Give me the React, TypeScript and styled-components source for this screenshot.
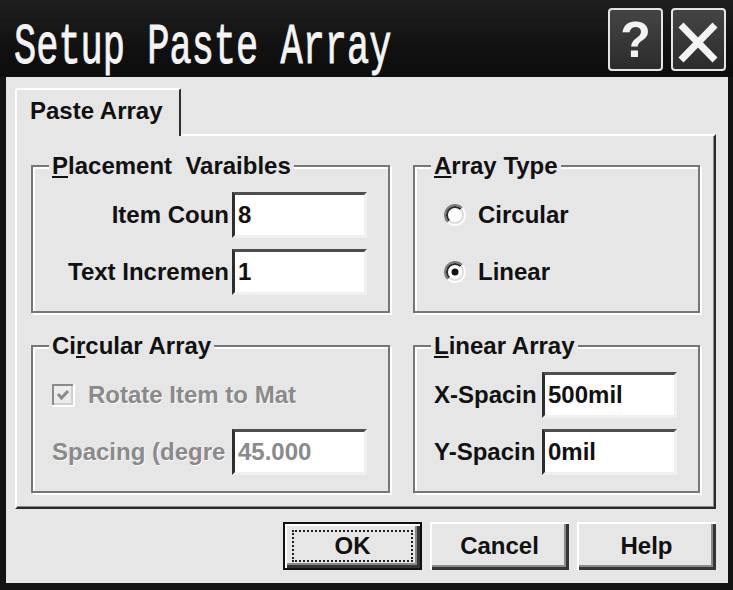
import React from "react";
import styled, { createGlobalStyle } from "styled-components";

const GlobalStyle = createGlobalStyle`
  html, body {
    margin: 0;
    padding: 0;
    background: #000;
  }
  body {
    font-family: "Liberation Sans", Arial, sans-serif;
  }
`;

const FACE = "#e6e6e6";

const Window = styled.div`
  width: 733px;
  height: 590px;
  background: #131313;
  display: flex;
  flex-direction: column;
  overflow: hidden;
`;

const TitleBar = styled.div`
  height: 77px;
  flex: none;
  box-sizing: border-box;
  padding: 8px 7px 0 14px;
  display: flex;
  align-items: flex-start;
  gap: 8px;
  background: linear-gradient(#1f1f1f, #111 60%, #0d0d0d);
`;

const Title = styled.div`
  flex: 1;
  margin-top: 12px;
  font-family: "Liberation Mono", "Courier New", monospace;
  font-size: 37px;
  line-height: 1;
  color: #f4f4f4;
  white-space: pre;
  -webkit-text-stroke: 0.6px #f4f4f4;
  transform: scaleY(1.55);
  transform-origin: left top;
`;

const CaptionButton = styled.div`
  width: 55px;
  height: 63px;
  box-sizing: border-box;
  border: 2px solid #e4e4e4;
  border-radius: 4px;
  background: linear-gradient(#444, #2c2c2c);
  display: flex;
  align-items: center;
  justify-content: center;
  color: #f2f2f2;
  font-family: "Liberation Sans", Arial, sans-serif;
  font-weight: bold;
  font-size: 50px;
  line-height: 1;
`;

const Client = styled.div`
  flex: 1;
  margin: 0 5px 7px 6px;
  background: ${FACE};
  box-sizing: border-box;
  padding: 11px 12px 13px 9px;
  display: flex;
  flex-direction: column;
  font-weight: bold;
  font-size: 24px;
  color: #111;
`;

const TabStrip = styled.div`
  display: flex;
`;

const Tab = styled.div`
  position: relative;
  z-index: 1;
  width: 166px;
  height: 48px;
  box-sizing: border-box;
  margin-bottom: -2px;
  padding: 7px 0 0 13px;
  line-height: 28px;
  background: ${FACE};
  border-left: 2px solid #fff;
  border-top: 2px solid #fff;
  border-right: 2px solid #2e2e2e;
  border-top-left-radius: 3px;
  border-top-right-radius: 2px;
`;

const Panel = styled.div`
  height: 375px;
  box-sizing: border-box;
  border: 2px solid;
  border-color: #fff #2a2a2a #2a2a2a #fff;
  box-shadow: inset -1px -1px 0 #8c8c8c;
  padding: 16px 14px 14px 14px;
  display: grid;
  grid-template-columns: 359px 287px;
  grid-template-rows: 161px 161px;
  column-gap: 23px;
  row-gap: 19px;
`;

const Group = styled.fieldset`
  margin: 0;
  padding: 0;
  min-width: 0;
  box-sizing: border-box;
  border: 2px solid #767676;
  box-shadow: inset 2px 2px 0 #fff, 2px 2px 0 #fff;
`;

const Legend = styled.legend`
  margin-left: 16px;
  padding: 0 3px;
  line-height: 28px;
  background: ${FACE};
  white-space: pre;
`;

const FieldGrid = styled.div`
  display: grid;
  grid-template-columns: 1fr 135px;
  grid-auto-rows: 46px;
  column-gap: 3px;
  row-gap: 11px;
  align-items: center;
  padding: 12px 21px 0 19px;
`;

const Label = styled.div<{ $align?: "left" | "right"; $disabled?: boolean }>`
  text-align: ${(p) => p.$align || "left"};
  white-space: pre;
  overflow: hidden;
  color: ${(p) => (p.$disabled ? "#8a8a8a" : "#111")};
  text-shadow: ${(p) => (p.$disabled ? "1px 1px 0 #fafafa" : "none")};
`;

const Edit = styled.div<{ $disabled?: boolean }>`
  height: 46px;
  box-sizing: border-box;
  border: 3px solid;
  border-color: #4e4e4e #f0f0f0 #f0f0f0 #2e2e2e;
  background: #fff;
  padding: 0 3px;
  line-height: 39px;
  color: ${(p) => (p.$disabled ? "#8a8a8a" : "#111")};
`;

const CheckRow = styled.div`
  grid-column: 1 / -1;
  display: flex;
  align-items: center;
  gap: 13px;
`;

const RadioList = styled.div`
  display: grid;
  grid-auto-rows: 46px;
  row-gap: 11px;
  padding: 12px 0 0 29px;
`;

const RadioRow = styled.div`
  display: flex;
  align-items: center;
  gap: 12px;
`;

const ButtonRow = styled.div`
  display: flex;
  justify-content: flex-end;
  gap: 8px;
  margin-top: 13px;
`;

const Button = styled.div<{ $default?: boolean }>`
  width: 139px;
  height: 48px;
  box-sizing: border-box;
  display: flex;
  padding: ${(p) => (p.$default ? "6px 7px" : "8px")};
  background: ${FACE};
  border: ${(p) => (p.$default ? "2px solid #111" : "none")};
  box-shadow: inset 2px 2px 0 #fff, inset -3px -3px 0 #353535,
    inset -5px -5px 0 #8a8a8a;
`;

const ButtonFace = styled.div<{ $focused?: boolean }>`
  flex: 1;
  display: flex;
  align-items: center;
  justify-content: center;
  border: 2px dotted ${(p) => (p.$focused ? "#222" : "transparent")};
  line-height: 28px;
`;

const Radio = ({ checked }: { checked?: boolean }) => (
  <svg width="22" height="22" viewBox="0 0 22 22">
    <circle cx="11" cy="11" r="10" fill="#fff" />
    <path d="M3.9 18.1 A10 10 0 0 1 18.1 3.9" stroke="#7a7a7a" strokeWidth="2" fill="none" />
    <path d="M18.1 3.9 A10 10 0 0 1 3.9 18.1" stroke="#fff" strokeWidth="2" fill="none" />
    <path d="M5.3 16.7 A8 8 0 0 1 16.7 5.3" stroke="#2a2a2a" strokeWidth="2" fill="none" />
    <path d="M16.7 5.3 A8 8 0 0 1 5.3 16.7" stroke="#dcdcdc" strokeWidth="2" fill="none" />
    {checked && <circle cx="11" cy="11" r="3.5" fill="#111" />}
  </svg>
);

const DisabledCheck = () => (
  <svg width="23" height="23" viewBox="0 0 23 23">
    <rect x="0" y="0" width="23" height="23" fill="#fff" />
    <rect x="0" y="0" width="21" height="21" fill="#8a8a8a" />
    <rect x="2" y="2" width="19" height="19" fill="#cfcfcf" />
    <rect x="2" y="2" width="17" height="17" fill="#ececec" />
    <polyline points="6,10 9.5,14 16,7" stroke="#8a8a8a" strokeWidth="3" fill="none" />
  </svg>
);

const CloseGlyph = () => (
  <svg width="51" height="59" viewBox="0 0 51 59">
    <path d="M8 15 L42 50 M42 15 L8 50" stroke="#f4f4f4" strokeWidth="7" />
  </svg>
);

export default function App() {
  return (
    <>
      <GlobalStyle />
      <Window>
        <TitleBar>
          <Title>Setup Paste Array</Title>
          <CaptionButton>?</CaptionButton>
          <CaptionButton>
            <CloseGlyph />
          </CaptionButton>
        </TitleBar>
        <Client>
          <TabStrip>
            <Tab>Paste Array</Tab>
          </TabStrip>
          <Panel>
            <Group>
              <Legend>
                <u>P</u>lacement  Varaibles
              </Legend>
              <FieldGrid>
                <Label $align="right">Item Coun</Label>
                <Edit>8</Edit>
                <Label $align="right">Text Incremen</Label>
                <Edit>1</Edit>
              </FieldGrid>
            </Group>
            <Group>
              <Legend>
                <u>A</u>rray Type
              </Legend>
              <RadioList>
                <RadioRow>
                  <Radio />
                  <span>Circular</span>
                </RadioRow>
                <RadioRow>
                  <Radio checked />
                  <span>Linear</span>
                </RadioRow>
              </RadioList>
            </Group>
            <Group>
              <Legend>
                Ci<u>r</u>cular Array
              </Legend>
              <FieldGrid>
                <CheckRow>
                  <DisabledCheck />
                  <Label $disabled>Rotate Item to Mat</Label>
                </CheckRow>
                <Label $disabled>Spacing (degre</Label>
                <Edit $disabled>45.000</Edit>
              </FieldGrid>
            </Group>
            <Group>
              <Legend>
                <u>L</u>inear Array
              </Legend>
              <FieldGrid>
                <Label>X-Spacin</Label>
                <Edit>500mil</Edit>
                <Label>Y-Spacin</Label>
                <Edit>0mil</Edit>
              </FieldGrid>
            </Group>
          </Panel>
          <ButtonRow>
            <Button $default>
              <ButtonFace $focused>OK</ButtonFace>
            </Button>
            <Button>
              <ButtonFace>Cancel</ButtonFace>
            </Button>
            <Button>
              <ButtonFace>Help</ButtonFace>
            </Button>
          </ButtonRow>
        </Client>
      </Window>
    </>
  );
}
